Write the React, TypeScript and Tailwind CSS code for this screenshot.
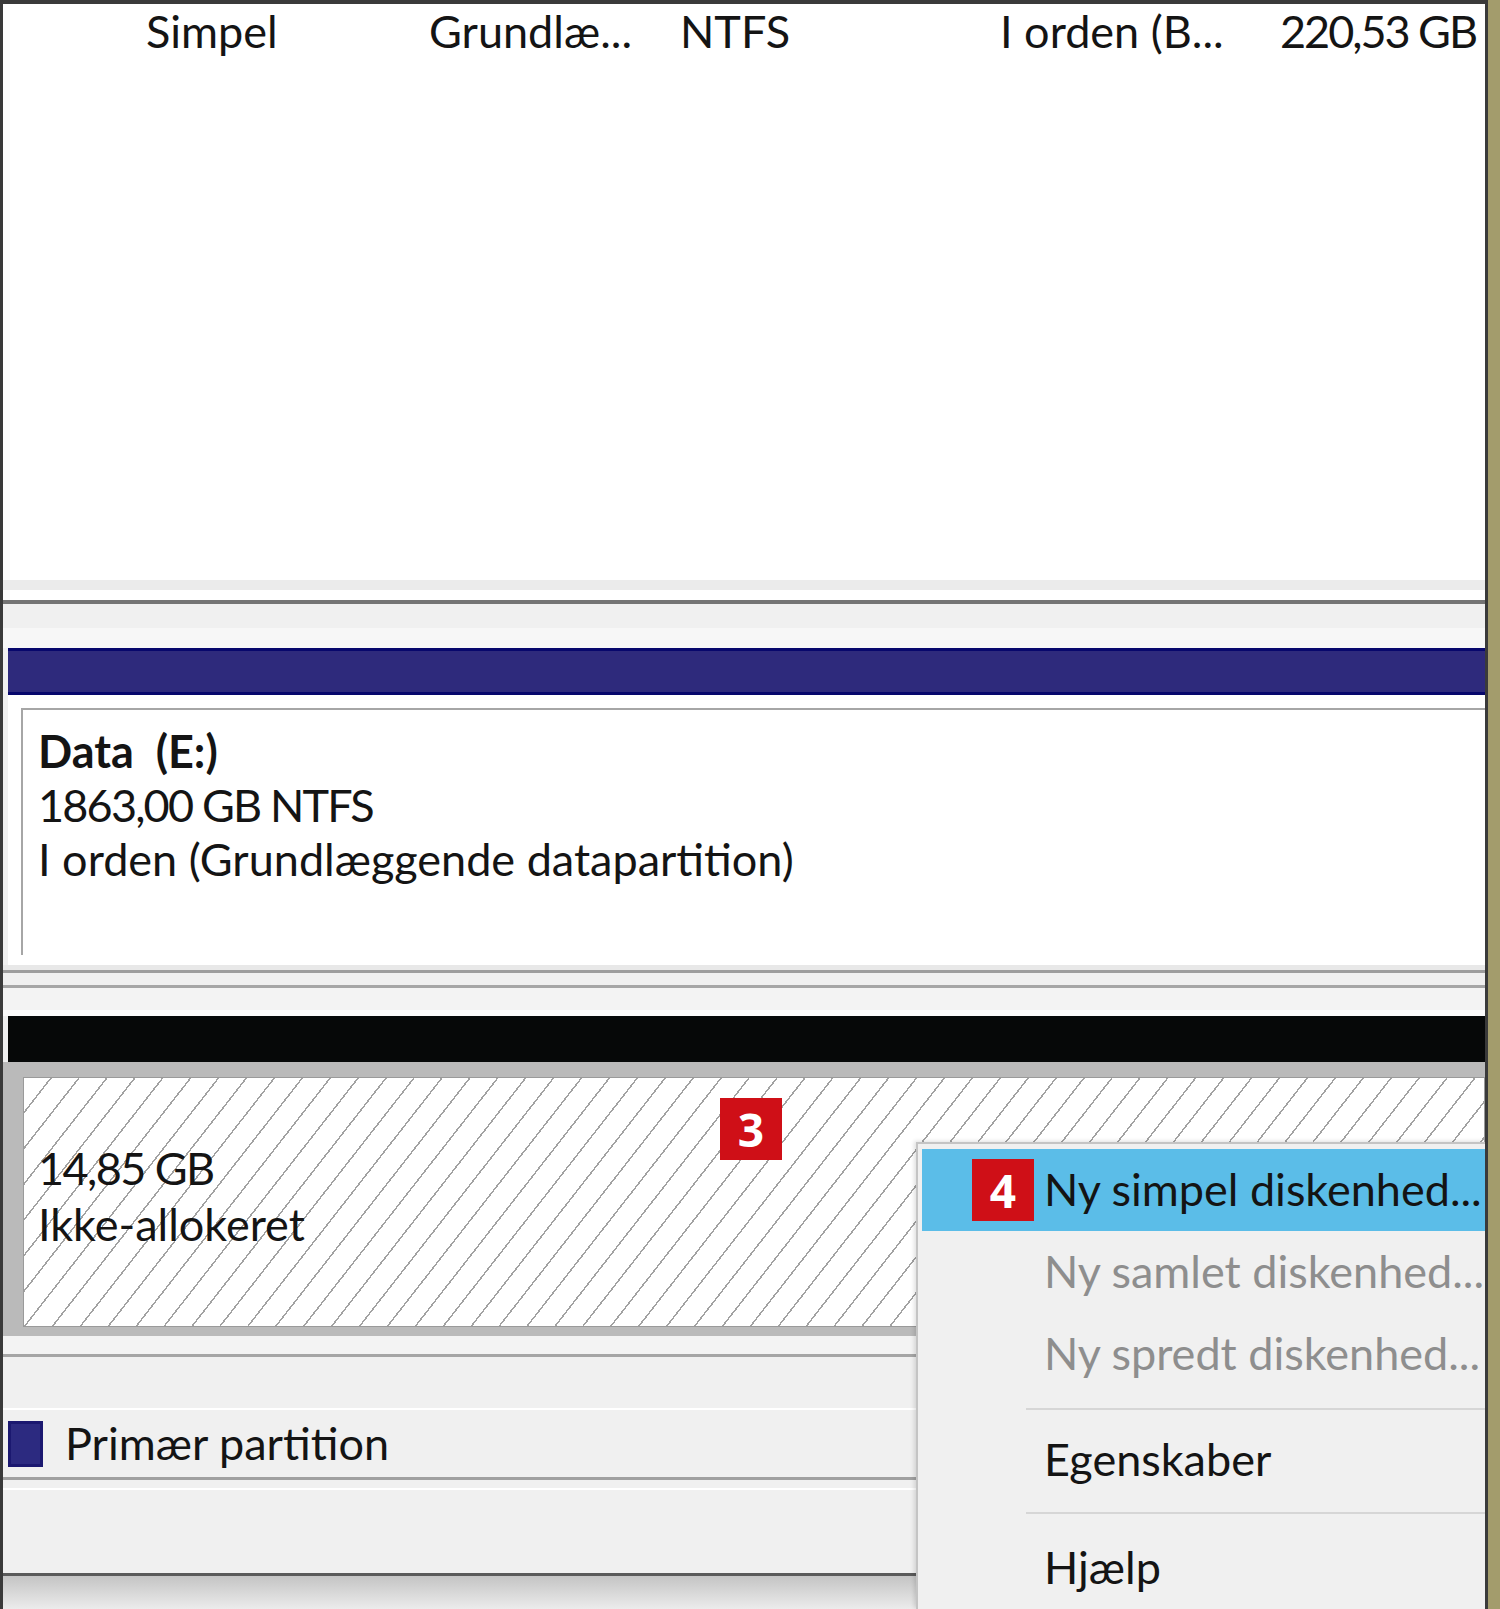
import React from "react";

const hatch =
  "bg-[repeating-linear-gradient(128deg,transparent_0px,transparent_20.5px,#a2a2a2_20.5px,#a2a2a2_22px)]";

function MenuItem({ label, disabled }: { label: string; disabled?: boolean }) {
  return (
    <div className={`flex h-[82px] items-center pl-[122px] ${disabled ? "text-[#8e8e8e]" : "text-[#111]"}`}>
      <span className="whitespace-nowrap">{label}</span>
    </div>
  );
}

function Badge({ n }: { n: string }) {
  return (
    <div className="flex h-[62px] w-[62px] shrink-0 items-center justify-center bg-[#cf0f17] font-['Open_Sans',sans-serif] text-[46px] font-bold leading-none text-white">
      {n}
    </div>
  );
}

export default function App() {
  return (
    <div className="flex h-[1609px] w-[1500px] overflow-hidden bg-[#f0f0f0] font-['Lato',sans-serif] text-[45px] text-[#141414]">
      <div className="relative flex min-w-0 flex-1 flex-col overflow-hidden border-t-[4px] border-r-[3px] border-l-[3px] border-[#3a3a3a]">
        {/* volume list */}
        <div className="h-[576px] bg-white">
          <div className="flex h-[54px] items-center pl-[143px] leading-none whitespace-nowrap">
            <span className="w-[283px]">Simpel</span>
            <span className="w-[251px]">Grundlæ...</span>
            <span className="w-[320px]">NTFS</span>
            <span className="w-[280px]">I orden (B...</span>
            <span className="tracking-[-0.045em]">220,53 GB</span>
          </div>
        </div>

        <div className="h-[10px] bg-[#ebebeb]" />
        <div className="h-[10px] bg-white" />
        <div className="h-[4px] bg-[#747474]" />
        <div className="h-[24px] bg-[#f0f0f0]" />
        <div className="h-[20px] bg-[#f7f7f7]" />

        {/* disk 1 */}
        <div className="ml-[5px] h-[47px] border-y-[3px] border-[#07076c] bg-[#2e2a7c]" />
        <div className="ml-[5px] bg-white pt-[13px] pb-[10px] pl-[13px]">
          <div className="h-[247px] border-t-[2px] border-l-[2px] border-[#a6a6a6] pt-[14px] pl-[15px] leading-[54px]">
            <div className="font-bold whitespace-pre">Data  (E:)</div>
            <div className="tracking-[-0.04em]">1863,00 GB NTFS</div>
            <div>I orden (Grundlæggende datapartition)</div>
          </div>
        </div>

        <div className="h-[5px] bg-[#e8e8e8]" />
        <div className="h-[3px] bg-[#9c9c9c]" />
        <div className="h-[12px] bg-[#efefef]" />
        <div className="h-[3px] bg-[#a5a5a5]" />
        <div className="h-[22px] bg-[#f3f3f3]" />
        <div className="h-[6px] bg-[#fbfbfb]" />

        {/* disk 2 */}
        <div className="ml-[5px] h-[46px] bg-[#060808]" />
        <div className="h-[274px] bg-[#bababa] pt-[15px] pb-[9px] pl-[20px]">
          <div className={`relative h-[250px] border border-[#9a9a9a] bg-white ${hatch} pt-[62px] pl-[14px] leading-[56px]`}>
            <div className="tracking-[-0.035em]">14,85 GB</div>
            <div>Ikke-allokeret</div>
            <div className="absolute top-[20px] left-[696px]">
              <Badge n="3" />
            </div>
          </div>
        </div>

        <div className="h-[18px] bg-[#f3f3f3]" />
        <div className="h-[3px] bg-[#a5a5a5]" />
        <div className="h-[51px] bg-[#f0f0f0]" />
        <div className="h-[2px] bg-white" />

        {/* legend */}
        <div className="flex h-[67px] items-center gap-[22px] bg-[#f0f0f0] pl-[5px]">
          <div className="h-[46px] w-[35px] border-[3px] border-[#1b1870] bg-[#2c2a80]" />
          <span>Primær partition</span>
        </div>
        <div className="h-[3px] bg-[#a0a0a0]" />
        <div className="h-[8px] bg-[#f0f0f0]" />
        <div className="h-[2px] bg-white" />
        <div className="h-[83px] bg-[#f0f0f0]" />
        <div className="h-[3px] bg-[#5a5a5a]" />
        <div className="flex-1 bg-gradient-to-b from-[#c4c4c4] to-[#ececec]" />

        {/* context menu */}
        <div className="absolute top-[1138px] right-0 bottom-0 left-[913px] border-t-[2px] border-l-[2px] border-[#c4c4c4] bg-[#f0f0f0] pt-[5px] pl-[4px] shadow-[-2px_-1px_4px_rgba(0,0,0,0.12)]">
          <div className="flex h-[82px] items-center gap-[10px] bg-[#5bbde8] pl-[50px]">
            <Badge n="4" />
            <span className="whitespace-nowrap">Ny simpel diskenhed...</span>
          </div>
          <MenuItem label="Ny samlet diskenhed..." disabled />
          <MenuItem label="Ny spredt diskenhed..." disabled />
          <div className="flex h-[27px] items-center pl-[104px]">
            <div className="h-[2px] flex-1 bg-[#d6d6d6]" />
          </div>
          <div className="flex h-[76px] items-center pl-[122px]">Egenskaber</div>
          <div className="flex h-[30px] items-center pl-[104px]">
            <div className="h-[2px] flex-1 bg-[#d6d6d6]" />
          </div>
          <div className="flex h-[80px] items-center pl-[122px]">Hjælp</div>
        </div>
      </div>
      <div className="w-[12px] shrink-0 bg-[#a39c6c]" />
    </div>
  );
}
